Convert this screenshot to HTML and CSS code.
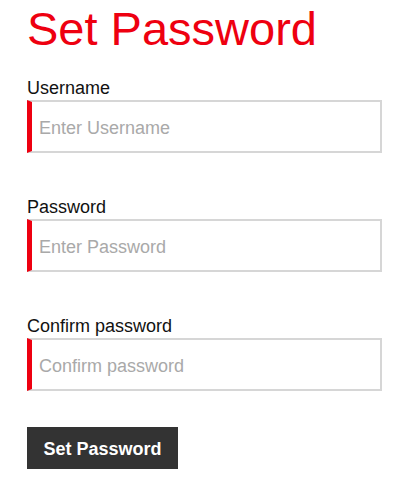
FILE: index.html
```html
<!DOCTYPE html>
<html lang="en">
<head>
<meta charset="utf-8">
<title>Set Password</title>
<link rel="stylesheet" href="styles.css">
</head>
<body>
<main class="page">
  <h1 class="title">Set Password</h1>
  <form class="form">
    <div class="field">
      <label class="label" for="username">Username</label>
      <input class="input" id="username" type="text" placeholder="Enter Username">
    </div>
    <div class="field">
      <label class="label" for="password">Password</label>
      <input class="input" id="password" type="password" placeholder="Enter Password">
    </div>
    <div class="field">
      <label class="label" for="confirm">Confirm password</label>
      <input class="input" id="confirm" type="password" placeholder="Confirm password">
    </div>
    <div class="actions">
      <button class="btn" type="button">Set Password</button>
    </div>
  </form>
</main>
</body>
</html>
```
FILE: styles.css
```css
html, body {
  margin: 0;
  padding: 0;
  background: #fff;
}
body {
  font-family: "Liberation Sans", Arial, sans-serif;
  color: #111;
}
.page {
  padding: 6px 28px 0 27px;
}
.title {
  margin: 0;
  font-size: 47px;
  line-height: 46px;
  font-weight: normal;
  color: #ee0010;
}
.form {
  display: flex;
  flex-direction: column;
  gap: 44px;
  margin-top: 26px;
}
.field {
  display: flex;
  flex-direction: column;
}
.label {
  font-size: 18px;
  line-height: 20px;
  margin-bottom: 2px;
  color: #111;
}
.input {
  box-sizing: border-box;
  width: 355px;
  height: 53px;
  margin: 0;
  border: 2px solid #d6d6d6;
  border-left: 5px solid #ee0010;
  padding: 3px 8px 0 7px;
  font-family: "Liberation Sans", Arial, sans-serif;
  font-size: 18px;
  color: #333;
  background: #fff;
  outline: none;
}
.input::placeholder {
  color: #a9a9a9;
}
.actions {
  margin-top: -8px;
}
.btn {
  width: 151px;
  height: 42px;
  border: 0;
  margin: 0;
  padding: 2px 0 0;
  background: #333333;
  color: #fff;
  font-family: "Liberation Sans", Arial, sans-serif;
  font-size: 18px;
  font-weight: bold;
}
```
